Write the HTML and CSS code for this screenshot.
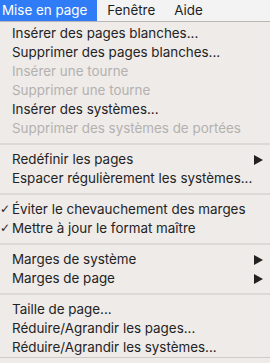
FILE: index.html
```html
<!DOCTYPE html>
<html lang="fr">
<head>
    <meta charset="UTF-8">
    <title>Mise en page</title>
    <link rel="stylesheet" href="styles.css">
</head>
<body>
    <div class="menubar">
        <span class="menubar-item active">Mise en page</span>
        <span class="menubar-item">Fenêtre</span>
        <span class="menubar-item">Aide</span>
    </div>
    <div class="menu">
        <div class="item">Insérer des pages blanches...</div>
        <div class="item">Supprimer des pages blanches...</div>
        <div class="item disabled">Insérer une tourne</div>
        <div class="item disabled">Supprimer une tourne</div>
        <div class="item">Insérer des systèmes...</div>
        <div class="item disabled">Supprimer des systèmes de portées</div>
        <div class="sep"></div>
        <div class="item sub">Redéfinir les pages</div>
        <div class="item">Espacer régulièrement les systèmes...</div>
        <div class="sep"></div>
        <div class="item checked">Éviter le chevauchement des marges</div>
        <div class="item checked">Mettre à jour le format maître</div>
        <div class="sep"></div>
        <div class="item sub">Marges de système</div>
        <div class="item sub">Marges de page</div>
        <div class="sep"></div>
        <div class="item">Taille de page...</div>
        <div class="item">Réduire/Agrandir les pages...</div>
        <div class="item">Réduire/Agrandir les systèmes...</div>
    </div>
</body>
</html>
```

FILE: styles.css
```css
* {
    margin: 0;
    padding: 0;
    box-sizing: border-box;
}

body {
    width: 270px;
    height: 363px;
    overflow: hidden;
    font-family: Inter, "Liberation Sans", Arial, sans-serif;
    font-size: 13.4px;
    color: #232323;
    background: #eeebe9;
}

.menubar {
    display: flex;
    height: 22px;
    background: #f4f3f3;
    border-bottom: 1px solid #b9b6b5;
}

.menubar-item {
    padding: 0 10px 0 9px;
    line-height: 21px;
    color: #1e1e1e;
}

.menubar-item.active {
    background: #2f7cf6;
    color: #fff;
    padding: 0 10px 0 2px;
}

.menubar-item:nth-child(2) {
    padding-left: 10px;
}

.menu {
    padding-top: 2px;
    border-bottom: 1px solid #cfcbc9;
}

.item {
    position: relative;
    height: 19px;
    line-height: 19px;
    padding-left: 12px;
    white-space: nowrap;
}

.disabled {
    color: #b4b1af;
}

.checked::before {
    content: "✓";
    position: absolute;
    left: 0;
    top: 0;
    font-size: 12px;
    font-family: "DejaVu Sans", sans-serif;
}

.sub::after {
    content: "";
    position: absolute;
    right: 7px;
    top: 5px;
    border-style: solid;
    border-width: 5px 0 5px 9px;
    border-color: transparent transparent transparent #222;
}

.sep {
    height: 12px;
    display: flex;
    align-items: center;
}

.sep::before {
    content: "";
    flex: 1;
    height: 2px;
    background: #dcd9d7;
}
```
